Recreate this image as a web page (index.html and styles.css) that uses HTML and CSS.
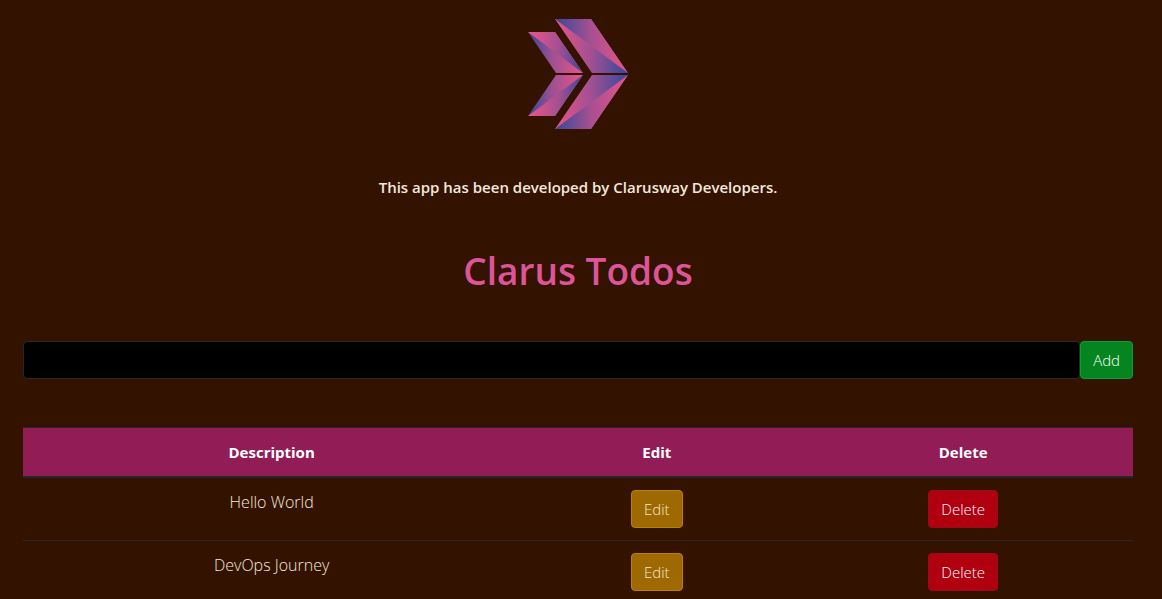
FILE: index.html
```
<!DOCTYPE html>
<html lang="en">
<head>
<meta charset="utf-8">
<title>Clarus Todos</title>
<link rel="stylesheet" href="styles.css">
</head>
<body>
<main class="container">
  <svg class="logo" width="102" height="112" viewBox="0 0 102 112" role="img" aria-label="Clarusway">
    <defs>
      <linearGradient id="s1" gradientUnits="userSpaceOnUse" x1="4" y1="0" x2="56" y2="0"><stop offset="0" stop-color="#e95487"/><stop offset=".55" stop-color="#a05092"/><stop offset="1" stop-color="#35489c"/></linearGradient>
      <linearGradient id="s2" gradientUnits="userSpaceOnUse" x1="1" y1="0" x2="56" y2="0"><stop offset="0" stop-color="#35489c"/><stop offset=".45" stop-color="#a05092"/><stop offset="1" stop-color="#e95487"/></linearGradient>
      <linearGradient id="l1" gradientUnits="userSpaceOnUse" x1="28" y1="0" x2="101" y2="0"><stop offset="0" stop-color="#35489c"/><stop offset=".5" stop-color="#a85090"/><stop offset="1" stop-color="#e95487"/></linearGradient>
      <linearGradient id="l2" gradientUnits="userSpaceOnUse" x1="28" y1="0" x2="101" y2="0"><stop offset="0" stop-color="#e95487"/><stop offset=".5" stop-color="#a05092"/><stop offset="1" stop-color="#35489c"/></linearGradient>
      <g id="half">
        <path fill="url(#s2)" d="M1 14H28L56 55H29Z"/>
        <path fill="url(#s1)" d="M1 14H28L56 55Z"/>
        <path fill="url(#l2)" d="M28 1H64L101 55H65Z"/>
        <path fill="url(#l1)" d="M28 1H64L101 55Z"/>
      </g>
    </defs>
    <use href="#half"/>
    <use href="#half" transform="matrix(1 0 0 -1 0 112)"/>
  </svg>
  <p class="credit">This app has been developed by Clarusway Developers.</p>
  <h1 class="title">Clarus Todos</h1>
  <form class="todo-form">
    <input class="todo-input" type="text" aria-label="New todo">
    <button class="btn btn-add" type="submit">Add</button>
  </form>
  <table class="todos">
    <thead>
      <tr><th class="col-description">Description</th><th class="col-edit">Edit</th><th class="col-delete">Delete</th></tr>
    </thead>
    <tbody>
      <tr>
        <td>Hello World</td>
        <td><button class="btn btn-edit" type="button">Edit</button></td>
        <td><button class="btn btn-delete" type="button">Delete</button></td>
      </tr>
      <tr>
        <td>DevOps Journey</td>
        <td><button class="btn btn-edit" type="button">Edit</button></td>
        <td><button class="btn btn-delete" type="button">Delete</button></td>
      </tr>
    </tbody>
  </table>
</main>
</body>
</html>
```
FILE: styles.css
```
* { box-sizing: border-box; }
html { background: #331300; }
body {
  margin: 0;
  background: #331300;
  color: #f3e8df;
  font-family: "Segoe UI", "Open Sans", "Noto Sans", sans-serif;
  font-size: 15px;
  font-weight: 300;
  line-height: 24px;
}
.container { padding: 18px 29px 0 23px; text-align: center; }
.logo { display: block; margin: 0 auto; }
.credit { margin: 45px 0 0; font-weight: 600; }
.title {
  margin: 48px 0 0;
  color: #dd5599;
  font-size: 37px;
  font-weight: 600;
  line-height: 48px;
}
.todo-form { display: flex; margin-top: 46px; }
.todo-input {
  flex: 1;
  min-width: 0;
  height: 38px;
  padding: 6px 12px;
  border: 1px solid #24282c;
  border-radius: 4px;
  background: #000;
  color: #f3e8df;
  font: inherit;
}
.btn {
  height: 38px;
  padding: 6px 12px;
  border: 1px solid;
  border-radius: 4px;
  color: #fff;
  font: inherit;
  font-size: 15px;
  line-height: 24px;
  vertical-align: top;
}
.btn-add { background: #05851f; border-color: #0b9f2b; }
.btn-edit { background: #9d6900; border-color: #bd8000; color: #f3e8d0; }
.btn-delete { background: #b0000f; border-color: #9d0b16; }
.todos {
  width: 100%;
  margin-top: 48px;
  border-spacing: 0;
  table-layout: fixed;
}
.todos th {
  padding: 12px;
  border-top: 1px solid #24282c;
  border-bottom: 2px solid #24282c;
  background: #911c56;
  background-clip: padding-box;
  color: #fff;
  font-weight: 700;
}
.todos td { padding: 12px; font-size: 16px; vertical-align: top; }
.todos tr + tr td { border-top: 1px solid #24282c; }
.col-description { width: 44.8%; }
.col-edit { width: 24.6%; }
.col-delete { width: 30.6%; }
```
